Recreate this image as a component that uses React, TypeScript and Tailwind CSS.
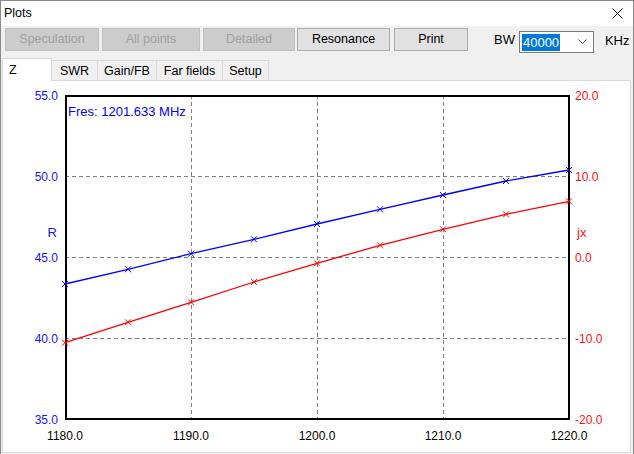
import React from "react";

// plot geometry, in page pixels
const X0 = 65;
const X1 = 569;
const Y0 = 95;
const Y1 = 419;
const xs = [65, 128, 191, 254, 317, 380, 443, 506, 569];
const rPts = [284, 269.3, 253.7, 239.3, 224, 209.3, 195, 181, 170];
const jxPts = [342.7, 322.3, 302.3, 282, 263.3, 245.3, 229.3, 214.3, 201.3];

const gridX = [191, 317, 443];
const gridY = [176, 257, 338];
const leftLabels = ["55.0", "50.0", "45.0", "40.0", "35.0"];
const rightLabels = ["20.0", "10.0", "0.0", "-10.0", "-20.0"];
const bottomLabels = ["1180.0", "1190.0", "1200.0", "1210.0", "1220.0"];

const Marker = ({ x, y, color }: { x: number; y: number; color: string }) => (
  <path
    d={`M${x - 3} ${y - 3}L${x + 3} ${y + 3}M${x + 3} ${y - 3}L${x - 3} ${y + 3}`}
    stroke={color}
    strokeWidth={1}
  />
);

const Series = ({ ys, color }: { ys: number[]; color: string }) => (
  <g>
    <polyline
      points={xs.map((x, i) => `${x},${ys[i]}`).join(" ")}
      fill="none"
      stroke={color}
      strokeWidth={1.3}
    />
    {xs.map((x, i) => (
      <Marker key={i} x={x} y={ys[i]} color={color} />
    ))}
  </g>
);

const Chart = () => {
  const rowY = [Y0, 176, 257, 338, Y1];
  const colX = [X0, 191, 317, 443, X1];
  return (
    <svg
      width={627}
      height={371}
      viewBox="3 81 627 371"
      style={{ fontFamily: '"Liberation Sans", Arial, sans-serif' }}
    >
      {gridY.map((y) => (
        <line
          key={y}
          x1={X0}
          x2={X1}
          y1={y + 0.5}
          y2={y + 0.5}
          stroke="#808080"
          strokeDasharray="4 3"
        />
      ))}
      {gridX.map((x) => (
        <line
          key={x}
          x1={x + 0.5}
          x2={x + 0.5}
          y1={Y0}
          y2={Y1}
          stroke="#808080"
          strokeDasharray="4 3"
        />
      ))}
      <rect
        x={66}
        y={96}
        width={X1 - 66}
        height={Y1 - 96}
        fill="none"
        stroke="#000"
        strokeWidth={2}
      />
      <Series ys={rPts} color="#0000ff" />
      <Series ys={jxPts} color="#ff0000" />

      <text x={68} y={116} fontSize={13} fill="#0000ff">
        Fres: 1201.633 MHz
      </text>

      {leftLabels.map((t, i) => (
        <text key={t} x={58} y={rowY[i] + 4.5} fontSize={12} fill="#1414ff" textAnchor="end">
          {t}
        </text>
      ))}
      {rightLabels.map((t, i) => (
        <text key={t} x={575} y={rowY[i] + 4.5} fontSize={12} fill="#ff1010">
          {t}
        </text>
      ))}
      {bottomLabels.map((t, i) => (
        <text key={t} x={colX[i]} y={440} fontSize={12} fill="#000" textAnchor="middle">
          {t}
        </text>
      ))}
      <text x={57} y={237} fontSize={13} fill="#1414ff" textAnchor="end">
        R
      </text>
      <text x={577} y={237} fontSize={13} fill="#ff1010">
        jx
      </text>
    </svg>
  );
};

const Btn = ({ label, w, ml, disabled }: { label: string; w: string; ml: string; disabled?: boolean }) => (
  <div
    className={`${w} ${ml} h-[23px] flex items-center justify-center border text-[12.5px] ${
      disabled
        ? "bg-[#cccccc] border-[#bfbfbf] text-[#a0a0a0]"
        : "bg-[#e1e1e1] border-[#adadad] text-black"
    }`}
  >
    {label}
  </div>
);

const Tab = ({ label, w, active }: { label: string; w: string; active?: boolean }) =>
  active ? (
    <div className={`${w} h-[23px] -mb-px relative z-10 bg-white border-t border-l border-r border-[#d9d9d9] pl-[6px] pt-[2px] text-[12.5px]`}>
      {label}
    </div>
  ) : (
    <div className={`${w} h-[21px] mt-[2px] bg-[#f0f0f0] border-t border-r border-[#d9d9d9] flex items-center justify-center text-[12.5px]`}>
      {label}
    </div>
  );

export default function App() {
  return (
    <div
      className="w-[634px] h-[454px] bg-[#f0f0f0] border-l border-t border-r border-[#8a8a8a] flex flex-col text-black overflow-hidden"
      style={{ fontFamily: '"Liberation Sans", Arial, sans-serif' }}
    >
      {/* title bar */}
      <div className="h-[25px] bg-white flex items-center justify-between pl-[3px] pr-[10px] text-[12.5px]">
        <span>Plots</span>
        <svg width="11" height="11" viewBox="0 0 11 11">
          <path d="M0.5 0.5L10.5 10.5M10.5 0.5L0.5 10.5" stroke="#000" strokeWidth={1} />
        </svg>
      </div>

      {/* toolbar */}
      <div className="h-[32px] flex items-start pt-[2px]">
        <Btn label="Speculation" w="w-[94px]" ml="ml-[4px]" disabled />
        <Btn label="All points" w="w-[98px]" ml="ml-[3px]" disabled />
        <Btn label="Detailed" w="w-[92px]" ml="ml-[3px]" disabled />
        <Btn label="Resonance" w="w-[93px]" ml="ml-[2px]" />
        <Btn label="Print" w="w-[74px]" ml="ml-[4px]" />
        <div className="ml-[26px] h-[23px] flex items-center text-[13px]">BW</div>
        <div className="ml-[4px] mt-[3px] w-[75px] h-[22px] bg-white border border-[#7a7a7a] flex items-center pl-[2px] pr-[6px] justify-between">
          <span className="bg-[#0078d7] text-white text-[13px] leading-[17px] px-px">40000</span>
          <svg width="9" height="6" viewBox="0 0 9 6">
            <path d="M0.5 0.5L4.5 4.5L8.5 0.5" fill="none" stroke="#555" strokeWidth={1} />
          </svg>
        </div>
        <div className="ml-[11px] h-[23px] mt-[1px] flex items-center text-[13px]">KHz</div>
      </div>

      {/* tabs */}
      <div className="h-[22px] flex pl-[1px]">
        <Tab label="Z" w="w-[50px]" active />
        <Tab label="SWR" w="w-[46px]" />
        <Tab label="Gain/FB" w="w-[59px]" />
        <Tab label="Far fields" w="w-[66px]" />
        <Tab label="Setup" w="w-[46px]" />
      </div>

      {/* plot panel */}
      <div className="ml-px w-[629px] h-[373px] bg-white border border-[#d9d9d9]">
        <Chart />
      </div>
    </div>
  );
}
